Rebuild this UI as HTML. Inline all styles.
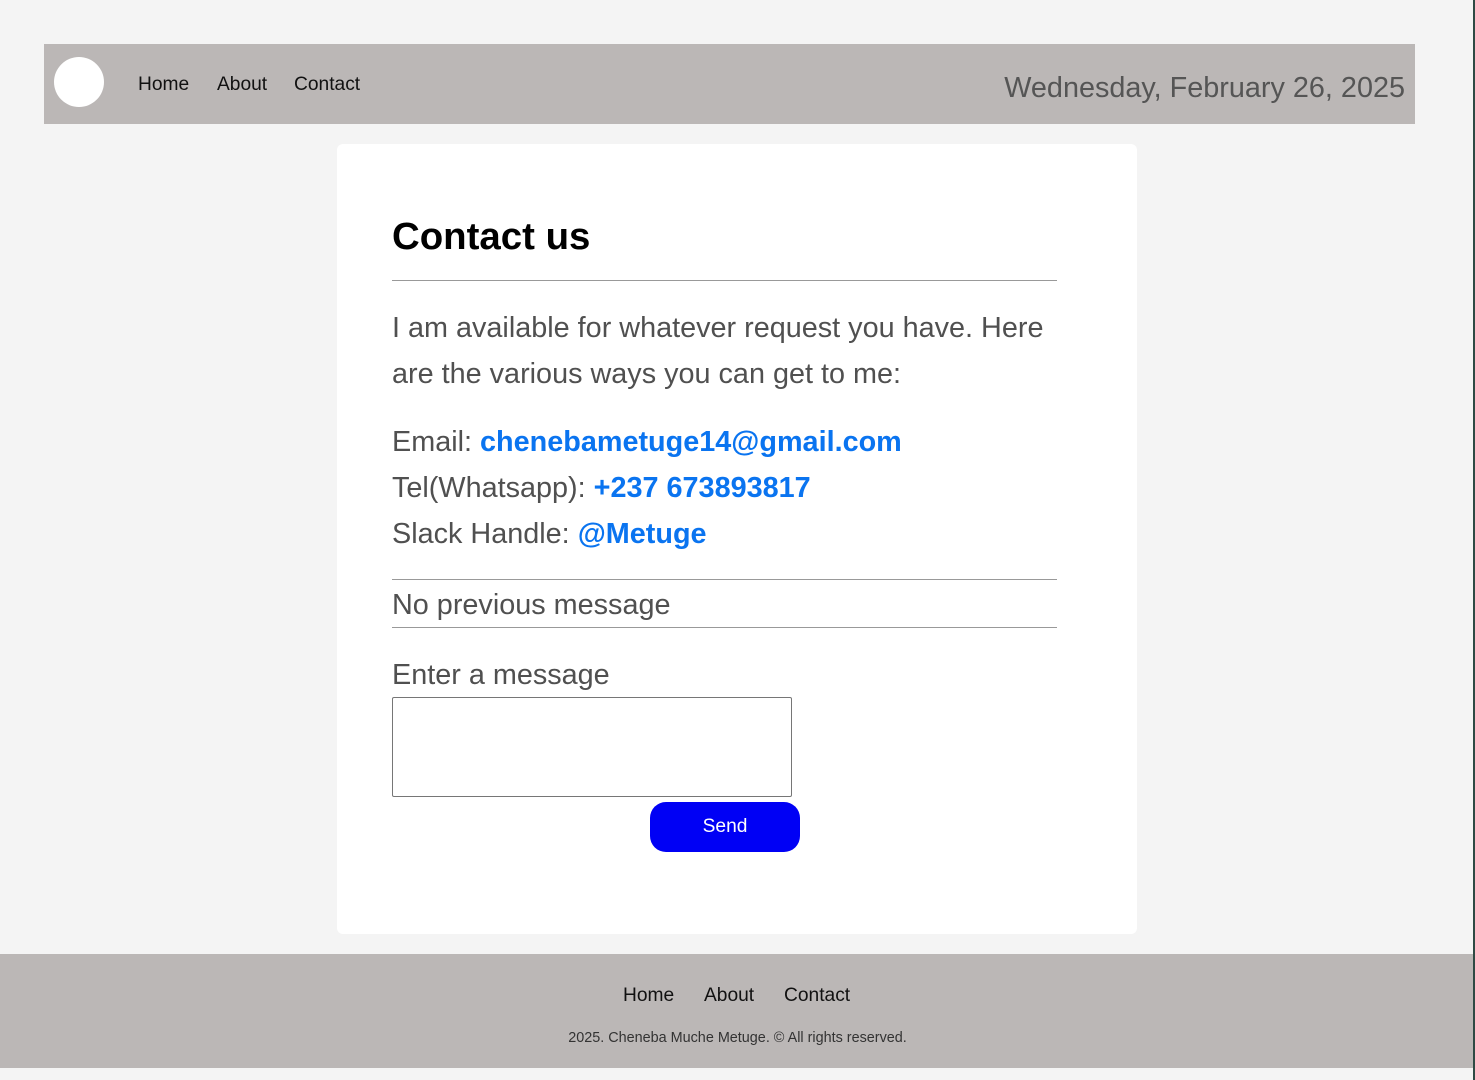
<!DOCTYPE html>
<html><head><meta charset="utf-8"><style>
*{margin:0;padding:0;box-sizing:border-box}
body{width:1475px;height:1080px;background:#f4f4f4;font-family:"Liberation Sans",sans-serif;position:relative;overflow:hidden}
.a{position:absolute;white-space:nowrap}
.hdr{left:44px;top:44px;width:1371px;height:80px;background:#bbb7b6}
.nav{font-size:19.2px;color:#111}
.card{left:337px;top:144px;width:800px;height:790px;background:#fff;border-radius:6px}
.g{color:#505050}
.bl{color:#0a74f0;font-weight:bold}
hr{position:absolute;border:0;border-top:1px solid #999;height:0}
.ft{left:0;top:954px;width:1475px;height:114px;background:#bbb7b6}
</style></head><body>
<div class="a hdr"></div>
<div class="a" style="left:54px;top:57px;width:50px;height:50px;border-radius:50%;background:#fff"></div>
<div class="a nav" style="left:138px;top:74px">Home</div>
<div class="a nav" style="left:217px;top:74px">About</div>
<div class="a nav" style="left:294px;top:74px">Contact</div>
<div class="a" style="right:70px;top:72px;font-size:28.8px;color:#555">Wednesday, February 26, 2025</div>
<div class="a card"></div>
<div class="a" style="left:392px;top:215px;font-size:38.4px;font-weight:bold;color:#000">Contact us</div>
<hr style="left:392px;top:280px;width:665px">
<div class="a g" style="left:392px;top:305px;font-size:28.8px;line-height:46px">I am available for whatever request you have. Here<br>are the various ways you can get to me:</div>
<div class="a g" style="left:392px;top:419px;font-size:28.8px;line-height:46px">Email: <span class="bl">chenebametuge14@gmail.com</span><br>Tel(Whatsapp): <span class="bl">+237 673893817</span><br>Slack Handle: <span class="bl">@Metuge</span></div>
<hr style="left:392px;top:579px;width:665px">
<div class="a g" style="left:392px;top:589px;font-size:28.8px">No previous message</div>
<hr style="left:392px;top:627px;width:665px">
<div class="a g" style="left:392px;top:659px;font-size:28.8px">Enter a message</div>
<div class="a" style="left:392px;top:697px;width:400px;height:100px;border:1px solid #767676;border-radius:2px;background:#fff"></div>
<div class="a" style="left:650px;top:802px;width:150px;height:50px;border-radius:16px;background:#0000f5;color:#fff;font-size:19.2px;text-align:center;line-height:50px">Send</div>
<div class="a ft"></div>
<div class="a nav" style="left:623px;top:985px">Home</div>
<div class="a nav" style="left:704px;top:985px">About</div>
<div class="a nav" style="left:784px;top:985px">Contact</div>
<div class="a" style="left:0;width:1475px;text-align:center;top:1030px;font-size:14.4px;color:#333">2025. Cheneba Muche Metuge. © All rights reserved.</div>
<div class="a" style="left:1473px;top:0;width:2px;height:1080px;background:#2f4a44"></div>
</body></html>
